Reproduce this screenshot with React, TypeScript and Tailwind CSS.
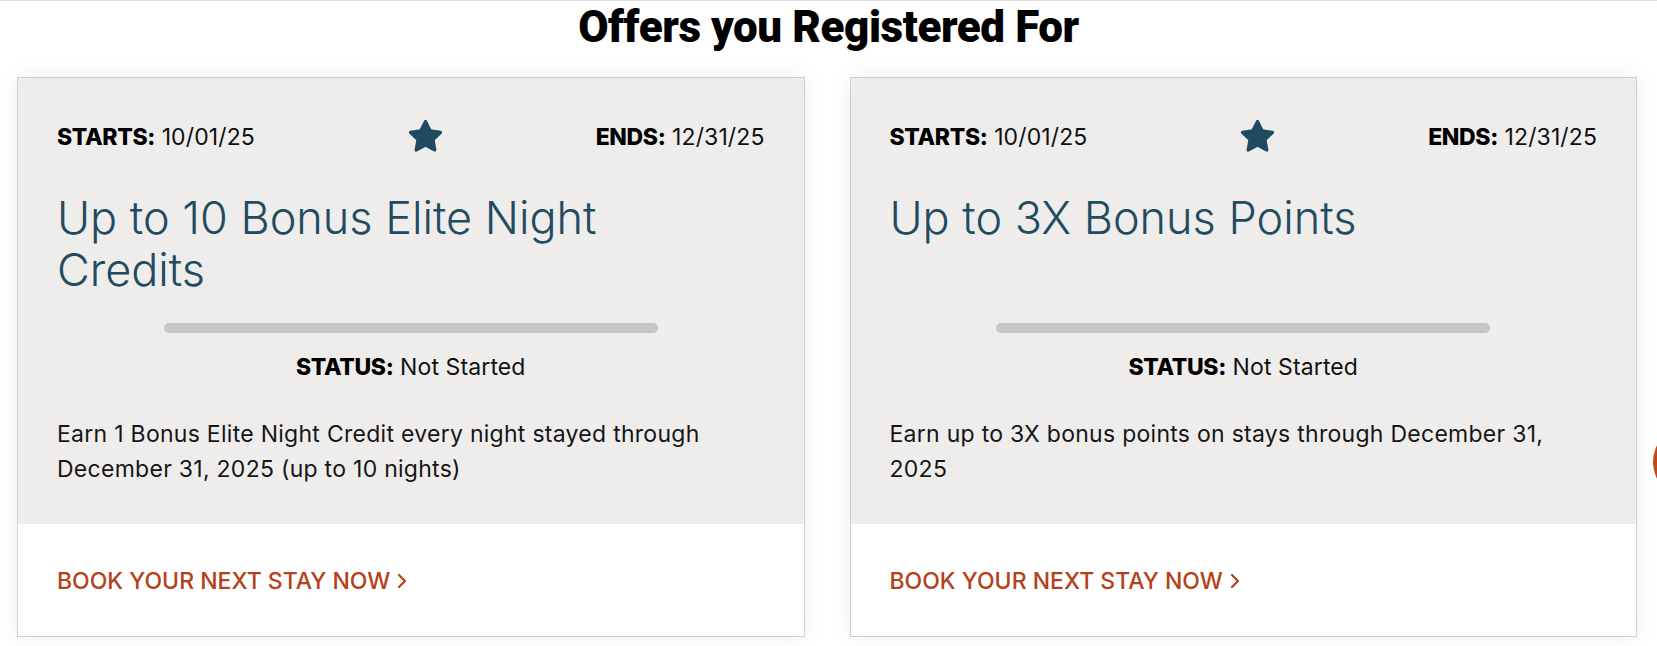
import type { ReactNode } from 'react';

type Offer = {
  id: string;
  starts: string;
  ends: string;
  title: string;
  status: string;
  description: string;
};

const OFFERS: Offer[] = [
  {
    id: 'enc',
    starts: '10/01/25',
    ends: '12/31/25',
    title: 'Up to 10 Bonus Elite Night Credits',
    status: 'Not Started',
    description: 'Earn 1 Bonus Elite Night Credit every night stayed through December 31, 2025 (up to 10 nights)',
  },
  {
    id: 'points',
    starts: '10/01/25',
    ends: '12/31/25',
    title: 'Up to 3X Bonus Points',
    status: 'Not Started',
    description: 'Earn up to 3X bonus points on stays through December 31, 2025',
  },
];

function StarIcon() {
  return (
    <svg width="37" height="37" viewBox="0 0 24 24" className="shrink-0 text-[#1f4a61]">
      <polygon
        points="12,2.2 15.1,8.3 21.8,9.3 16.9,14.1 18.1,20.8 12,17.6 5.9,20.8 7.1,14.1 2.2,9.3 8.9,8.3"
        fill="currentColor"
        stroke="currentColor"
        strokeWidth="2"
        strokeLinejoin="round"
      />
    </svg>
  );
}

function Label({ name, children }: { name: string; children: ReactNode }) {
  return (
    <p className="text-[23px] leading-[28px] tracking-[0.005em] text-[#111]">
      <span className="font-extrabold tracking-[-0.015em] text-black">{name}:</span> {children}
    </p>
  );
}

function OfferCard({ offer }: { offer: Offer }) {
  return (
    <div className="flex flex-col border border-[#cfcfcf] bg-white shadow-[0_0_22px_rgba(0,0,0,0.07)]">
      {/* Offer details */}
      <div className="flex-1 bg-[#eeedeb] px-[39px] pt-[40px] pb-[37px]">
        <div className="flex items-center justify-between">
          <Label name="STARTS">{offer.starts}</Label>
          <StarIcon />
          <Label name="ENDS">{offer.ends}</Label>
        </div>

        <h2 className="mt-[37px] min-h-[104px] max-w-[620px] text-[45px] leading-[52px] font-light text-[#224b60]">
          {offer.title}
        </h2>

        <div className="mx-auto mt-[27px] h-[10px] w-[494px] rounded-full bg-[#c4c7c9]" />

        <div className="mt-[20px] flex justify-center">
          <Label name="STATUS">{offer.status}</Label>
        </div>

        <p className="mt-[36px] max-w-[680px] text-[23px] leading-[35px] tracking-[0.012em] text-[#161616]">
          {offer.description}
        </p>
      </div>

      {/* Call to action */}
      <div className="px-[39px] pt-[43px] pb-[41px]">
        <a
          href="#"
          className="inline-flex items-center gap-[7px] text-[23px] leading-[28px] font-medium uppercase text-[#b5411a]"
        >
          Book your next stay now
          <svg width="10" height="16" viewBox="0 0 10 16" fill="none">
            <path d="M2 2l6 6-6 6" stroke="currentColor" strokeWidth="2.2" strokeLinecap="round" strokeLinejoin="round" />
          </svg>
        </a>
      </div>
    </div>
  );
}

export default function App() {
  return (
    <div className="relative min-h-[646px] overflow-hidden border-t border-[#dedede] bg-white font-['Inter','Roboto',sans-serif]">
      <h1 className="text-center font-['Roboto','Liberation_Sans',sans-serif] text-[44px] leading-[52px] font-black tracking-[-0.01em] text-black">
        Offers you Registered For
      </h1>

      <div className="mt-[24px] grid grid-cols-2 gap-[45px] pl-[17px] pr-[20px]">
        {OFFERS.map((o) => (
          <OfferCard key={o.id} offer={o} />
        ))}
      </div>

      {/* chat launcher peeking in from the right */}
      <div className="absolute left-[1653px] top-[425px] h-[72px] w-[72px] rounded-full bg-[#c1461c]" />
    </div>
  );
}
